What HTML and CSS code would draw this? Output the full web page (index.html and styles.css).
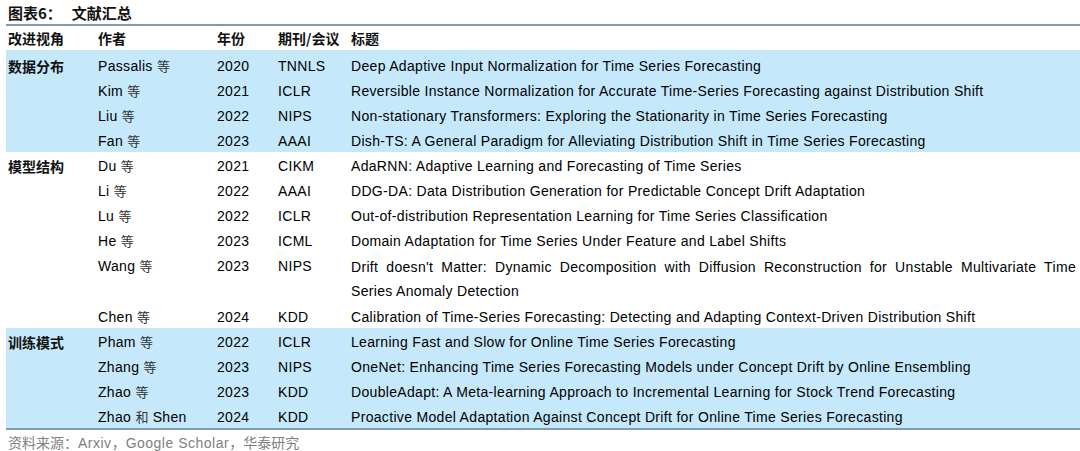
FILE: index.html
```html
<!DOCTYPE html>
<html lang="zh-CN">
<head>
<meta charset="utf-8">
<title>图表6：文献汇总</title>
<link rel="stylesheet" href="styles.css">
</head>
<body>
<div class="figure">
  <div class="caption"><span class="cap-num">图表6：</span><span class="cap-text">文献汇总</span></div>
  <table class="lit">
    <colgroup>
      <col class="c-view"><col class="c-author"><col class="c-year"><col class="c-venue"><col class="c-title">
    </colgroup>
    <thead>
      <tr><th>改进视角</th><th>作者</th><th>年份</th><th>期刊/会议</th><th>标题</th></tr>
    </thead>
    <tbody class="band blue first">
      <tr><td class="group">数据分布</td><td>Passalis <span class="cjk">等</span></td><td>2020</td><td>TNNLS</td><td>Deep Adaptive Input Normalization for Time Series Forecasting</td></tr>
      <tr><td></td><td>Kim <span class="cjk">等</span></td><td>2021</td><td>ICLR</td><td>Reversible Instance Normalization for Accurate Time-Series Forecasting against Distribution Shift</td></tr>
      <tr><td></td><td>Liu <span class="cjk">等</span></td><td>2022</td><td>NIPS</td><td>Non-stationary Transformers: Exploring the Stationarity in Time Series Forecasting</td></tr>
      <tr><td></td><td>Fan <span class="cjk">等</span></td><td>2023</td><td>AAAI</td><td>Dish-TS: A General Paradigm for Alleviating Distribution Shift in Time Series Forecasting</td></tr>
    </tbody>
    <tbody class="band white">
      <tr><td class="group">模型结构</td><td>Du <span class="cjk">等</span></td><td>2021</td><td>CIKM</td><td>AdaRNN: Adaptive Learning and Forecasting of Time Series</td></tr>
      <tr><td></td><td>Li <span class="cjk">等</span></td><td>2022</td><td>AAAI</td><td>DDG-DA: Data Distribution Generation for Predictable Concept Drift Adaptation</td></tr>
      <tr><td></td><td>Lu <span class="cjk">等</span></td><td>2022</td><td>ICLR</td><td>Out-of-distribution Representation Learning for Time Series Classification</td></tr>
      <tr><td></td><td>He <span class="cjk">等</span></td><td>2023</td><td>ICML</td><td>Domain Adaptation for Time Series Under Feature and Label Shifts</td></tr>
      <tr><td></td><td>Wang <span class="cjk">等</span></td><td>2023</td><td>NIPS</td><td class="wrap">Drift doesn't Matter: Dynamic Decomposition with Diffusion Reconstruction for Unstable Multivariate Time Series Anomaly Detection</td></tr>
      <tr><td></td><td>Chen <span class="cjk">等</span></td><td>2024</td><td>KDD</td><td>Calibration of Time-Series Forecasting: Detecting and Adapting Context-Driven Distribution Shift</td></tr>
    </tbody>
    <tbody class="band blue last">
      <tr><td class="group">训练模式</td><td>Pham <span class="cjk">等</span></td><td>2022</td><td>ICLR</td><td>Learning Fast and Slow for Online Time Series Forecasting</td></tr>
      <tr><td></td><td>Zhang <span class="cjk">等</span></td><td>2023</td><td>NIPS</td><td>OneNet: Enhancing Time Series Forecasting Models under Concept Drift by Online Ensembling</td></tr>
      <tr><td></td><td>Zhao <span class="cjk">等</span></td><td>2023</td><td>KDD</td><td>DoubleAdapt: A Meta-learning Approach to Incremental Learning for Stock Trend Forecasting</td></tr>
      <tr><td></td><td>Zhao <span class="cjk">和</span> Shen</td><td>2024</td><td>KDD</td><td>Proactive Model Adaptation Against Concept Drift for Online Time Series Forecasting</td></tr>
    </tbody>
  </table>
  <div class="source">资料来源：<span class="src-latin">Arxiv</span>，<span class="src-latin">Google Scholar</span>，华泰研究</div>
</div>
</body>
</html>
```

FILE: styles.css
```css
html, body {
  margin: 0;
  padding: 0;
  background: #ffffff;
}

body {
  font-family: "Liberation Sans", Arial, "Noto Sans CJK SC", sans-serif;
  color: #000;
}

.figure {
  width: 1080px;
  padding: 0 0 0 6px;
  box-sizing: border-box;
}

.caption {
  height: 24px;
  line-height: 26px;
  padding-left: 2px;
  font-family: "Noto Sans CJK SC", sans-serif;
  font-weight: 700;
  font-size: 15px;
  color: #111;
}

.cap-num {
  margin-right: 10px;
}

.lit {
  width: 1074px;
  border-collapse: collapse;
  table-layout: fixed;
  font-size: 14px;
  letter-spacing: 0.32px;
}

.c-view { width: 90px; }
.c-author { width: 119px; }
.c-year { width: 61px; }
.c-venue { width: 73px; }
.c-title { width: auto; }

.lit thead tr {
  border-top: 2px solid #7f99b7;
}

.lit th {
  text-align: left;
  font-family: "Noto Sans CJK SC", sans-serif;
  font-weight: 700;
  font-size: 14px;
  letter-spacing: 0;
  height: 24px;
  padding: 0 2px;
  line-height: 24px;
  vertical-align: middle;
  color: #111;
}

.lit td {
  padding: 3px 2px 0;
  line-height: 22px;
  height: 22px;
  vertical-align: top;
  white-space: nowrap;
}

.lit td.wrap {
  white-space: normal;
  text-align: justify;
  line-height: 24px;
  padding-right: 4px;
}

.band.blue td {
  background: #c5e9fb;
}

.band.first tr:first-child td {
  border-top: 2px solid #c5e9fb;
}

.band.last tr:last-child td {
  border-bottom: 2px solid #7f99b7;
}

.group {
  font-family: "Noto Sans CJK SC", sans-serif;
  font-weight: 700;
  letter-spacing: 0;
  color: #111;
}

.cjk {
  font-family: "Noto Sans CJK SC", sans-serif;
  font-size: 13px;
  letter-spacing: 0;
  color: #333;
}

.source {
  padding: 2px 2px 0;
  font-family: "Noto Sans CJK SC", sans-serif;
  font-size: 14px;
  line-height: 20px;
  color: #7f7f7f;
}

.src-latin {
  font-family: "Liberation Sans", Arial, sans-serif;
  letter-spacing: 0.5px;
}
```
